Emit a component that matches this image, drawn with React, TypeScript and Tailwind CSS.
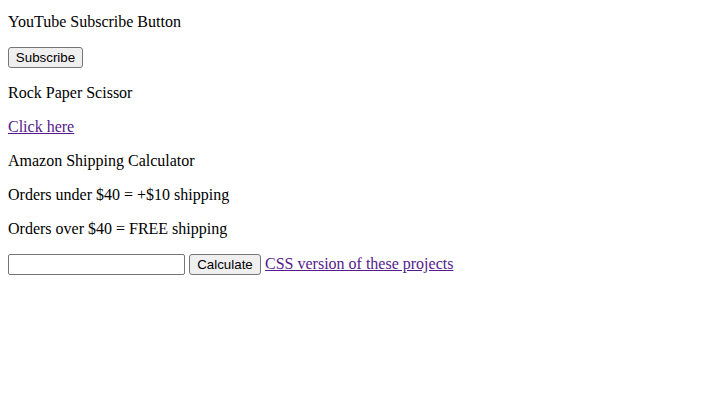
export default function App() {
  const btn =
    "inline-block h-[21px] px-[6px] align-baseline rounded-[3px] border border-[#767676] bg-[#efefef] font-['Liberation_Sans',Arial,sans-serif] text-[13.33px] leading-[normal] text-black";

  return (
    <div className="min-h-[400px] bg-white px-2 pt-[13px] font-['Liberation_Serif','Times_New_Roman',serif] text-[16px] leading-[normal] text-black">
      <p className="mb-4">YouTube Subscribe Button</p>
      <div>
        <button type="button" className={btn + " w-[75px]"}>
          Subscribe
        </button>
      </div>
      <p className="my-4">Rock Paper Scissor</p>
      <p className="my-4">
        <a href="#" className="text-[#551a8b] underline">
          Click here
        </a>
      </p>
      <p className="my-4">Amazon Shipping Calculator</p>
      <p className="my-4">Orders under $40 = +$10 shipping</p>
      <p className="my-4">Orders over $40 = FREE shipping</p>
      <div>
        <input
          type="text"
          className="inline-block h-[21px] w-[177px] align-baseline rounded-[2px] border border-[#767676] bg-white px-[2px] font-['Liberation_Sans',Arial,sans-serif] text-[13.33px]"
        />{" "}
        <button type="button" className={btn + " w-[72px]"}>
          Calculate
        </button>{" "}
        <a href="#" className="text-[#551a8b] underline">
          CSS version of these projects
        </a>
      </div>
    </div>
  );
}
